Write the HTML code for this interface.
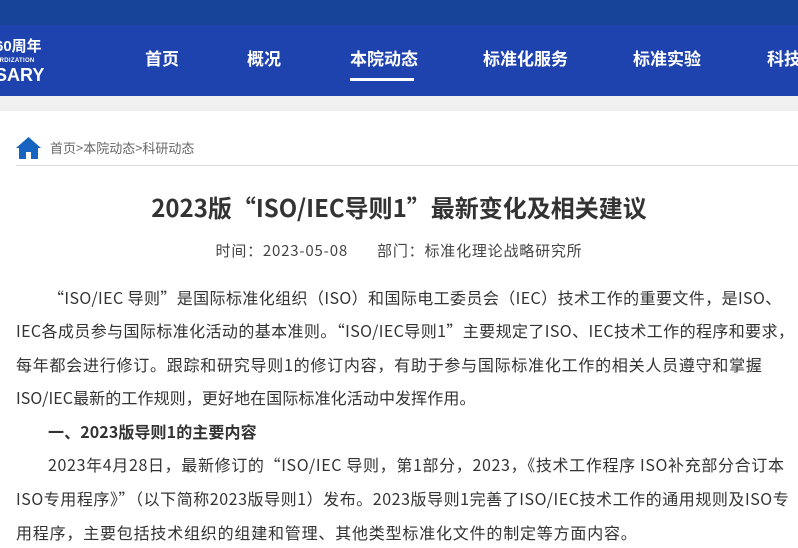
<!DOCTYPE html>
<html><head><meta charset="utf-8"><style>
*{margin:0;padding:0;box-sizing:border-box}
body{width:798px;height:548px;overflow:hidden;background:#fff;font-family:"Noto Sans CJK SC","Liberation Sans",sans-serif;color:#333}
.top{height:25px;background:#174399}
.nav{height:71px;background:#1e42ae;position:relative;color:#fff}
.logo{position:absolute;left:-5px;top:10px;font-weight:bold;font-family:"Liberation Sans","Noto Sans CJK SC",sans-serif}
.logo .a{font-size:15px;position:absolute;left:0;top:0;white-space:nowrap}
.logo .b{font-size:6px;position:absolute;left:0;top:23px;white-space:nowrap;letter-spacing:.3px}
.logo .c{font-size:18px;position:absolute;left:0;top:30px;white-space:nowrap}
.nav .it{position:absolute;top:20px;font-size:17px;font-weight:bold;white-space:nowrap}
.ul{position:absolute;left:350px;top:53px;width:64px;height:3px;background:#fff}
.gray{height:15px;background:#f0f0f0}
.bc{position:absolute;left:16px;top:136px;width:782px;height:30px;border-bottom:1px solid #ddd}
.bc span{position:absolute;left:34px;top:2px;font-size:13px;color:#666}
h1{position:absolute;left:0;width:798px;top:189px;text-align:center;font-size:24px;font-weight:bold;color:#333}
.meta{position:absolute;left:0;width:798px;top:240px;text-align:center;font-size:15px;color:#444;letter-spacing:0.8px}
.l{position:absolute;left:16px;font-size:16px;white-space:nowrap;color:#333}
</style></head><body>
<div class="top"></div>
<div class="nav">
<div class="logo"><div class="a">60周年</div><div class="b">ARDIZATION</div><div class="c">SARY</div></div>
<div class="it" style="left:145px">首页</div>
<div class="it" style="left:247px">概况</div>
<div class="it" style="left:350px">本院动态</div>
<div class="it" style="left:483px">标准化服务</div>
<div class="it" style="left:633px">标准实验</div>
<div class="it" style="left:767px">科技</div>
<div class="ul"></div>
</div>
<div class="gray"></div>
<div class="bc"><svg width="25" height="24" viewBox="0 0 25 24" style="position:absolute;left:0;top:0"><path d="M12.5 1L0 12h3v11h7v-7h5v7h7V12h3z" fill="#1565c0"/></svg><span>首页&gt;本院动态&gt;科研动态</span></div>
<h1>2023版“ISO/IEC导则1”最新变化及相关建议</h1>
<div class="meta">时间：2023-05-08&nbsp;&nbsp;&nbsp;&nbsp;&nbsp;&nbsp;&nbsp;部门：标准化理论战略研究所</div>
<div class="l" style="top:285px;left:48px;letter-spacing:0.4px">“ISO/IEC 导则”是国际标准化组织（ISO）和国际电工委员会（IEC）技术工作的重要文件，是ISO、</div>
<div class="l" style="top:318px;letter-spacing:0.4px">IEC各成员参与国际标准化活动的基本准则。“ISO/IEC导则1”主要规定了ISO、IEC技术工作的程序和要求，</div>
<div class="l" style="top:352px;letter-spacing:0.75px">每年都会进行修订。跟踪和研究导则1的修订内容，有助于参与国际标准化工作的相关人员遵守和掌握</div>
<div class="l" style="top:385px;letter-spacing:0.1px">ISO/IEC最新的工作规则，更好地在国际标准化活动中发挥作用。</div>
<div class="l" style="top:419px;left:48px;font-weight:bold;letter-spacing:0.1px">一、2023版导则1的主要内容</div>
<div class="l" style="top:452px;left:48px;letter-spacing:0.65px">2023年4月28日，最新修订的“ISO/IEC 导则，第1部分，2023，《技术工作程序 ISO补充部分合订本</div>
<div class="l" style="top:486px;letter-spacing:0.55px">ISO专用程序》”（以下简称2023版导则1）发布。2023版导则1完善了ISO/IEC技术工作的通用规则及ISO专</div>
<div class="l" style="top:520px;letter-spacing:0.8px">用程序，主要包括技术组织的组建和管理、其他类型标准化文件的制定等方面内容。</div>
</body></html>
